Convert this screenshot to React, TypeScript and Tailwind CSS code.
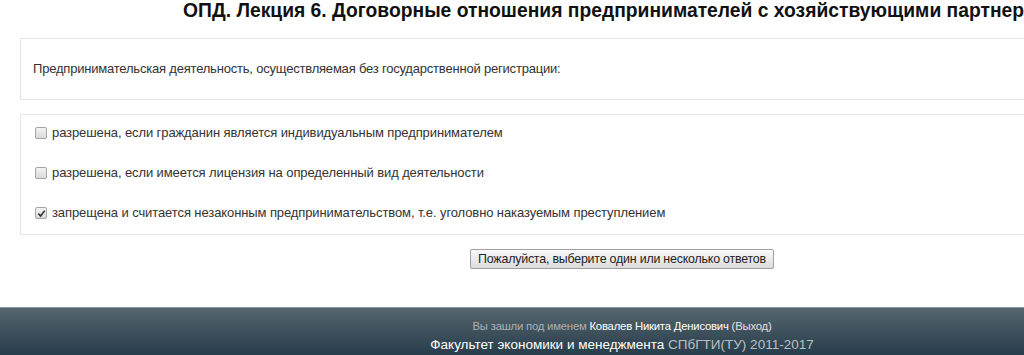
import React from 'react'

const answers = [
  { text: 'разрешена, если гражданин является индивидуальным предпринимателем', checked: false },
  { text: 'разрешена, если имеется лицензия на определенный вид деятельности', checked: false },
  { text: 'запрещена и считается незаконным предпринимательством, т.е. уголовно наказуемым преступлением', checked: true },
]

function Box({ checked }: { checked: boolean }) {
  return (
    <span className="relative flex h-[12px] w-[12px] shrink-0 items-center justify-center rounded-[2px] border border-[#a5a5a5] bg-gradient-to-b from-[#f4f4f4] to-[#d8d8d8]">
      {checked && (
        <svg width="9" height="9" viewBox="0 0 10 10" className="absolute">
          <path d="M1.5 5.2 L4 7.8 L8.6 1.8" fill="none" stroke="#333" strokeWidth="1.8" />
        </svg>
      )}
    </span>
  )
}

export default function App() {
  return (
    <div className="h-[355px] w-[1024px] overflow-hidden bg-white font-['Liberation_Sans',Arial,sans-serif] text-[#333]">
      <div className="w-[1244px]">
        <h2 className="h-[24px] pt-[1px] text-center text-[19.3px] leading-[20px] font-bold whitespace-nowrap text-[#111]">
          ОПД. Лекция 6. Договорные отношения предпринимателей с хозяйствующими партнерами
        </h2>

        <div className="px-5 pt-[14px]">
          <div className="flex h-[62px] items-center border border-[#e6e6e6] px-3 text-[13px] tracking-[-0.2px]">
            Предпринимательская деятельность, осуществляемая без государственной регистрации:
          </div>

          <div className="mt-[14px] flex flex-col gap-4 border border-[#e6e6e6] pt-[6px] pb-[9px] pl-[14px]">
            {answers.map((a) => (
              <div key={a.text} className="flex h-[24px] items-center gap-[5px] text-[13px] tracking-[-0.1px]">
                <Box checked={a.checked} />
                <span>{a.text}</span>
              </div>
            ))}
          </div>

          <div className="mt-[14px] flex justify-center">
            <button className="h-[20px] w-[304px] rounded-[2px] border border-[#a0a0a0] bg-gradient-to-b from-[#fafafa] to-[#dcdcdc] text-[12.4px] leading-[18px] whitespace-nowrap tracking-[-0.2px] text-[#222]">
              Пожалуйста, выберите один или несколько ответов
            </button>
          </div>
        </div>

        <footer className="mt-[38px] h-[60px] border-t border-[#8a969c] bg-gradient-to-b from-[#56666e] to-[#1c3242] pt-[11px] text-center">
          <div className="text-[11.3px] leading-[14px] text-[#a9b1b5] tracking-[-0.2px]">
            Вы зашли под именем <span className="font-medium text-white">Ковалев Никита Денисович</span>{' '}
            <span className="text-[#e0e0e0]">(Выход)</span>
          </div>
          <div className="mt-[4px] text-[13.5px] leading-[16px] text-white">
            Факультет экономики и менеджмента <span className="text-[#b9c0c4]">СПбГТИ(ТУ) 2011-2017</span>
          </div>
        </footer>
      </div>
    </div>
  )
}
